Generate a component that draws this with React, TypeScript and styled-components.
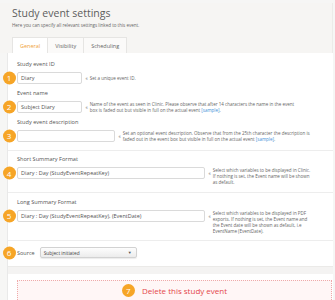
import React from 'react';
import styled, { createGlobalStyle } from 'styled-components';

const GlobalStyle = createGlobalStyle`
  html, body {
    margin: 0;
    padding: 0;
  }
  body {
    width: 335px;
    height: 300px;
    overflow: hidden;
    background: #f6f6f5;
    font-family: "Open Sans", "Liberation Sans", sans-serif;
    color: #555;
  }
`;

const Page = styled.div`
  width: 335px;
  height: 300px;
  padding-top: 3px;
  box-sizing: border-box;
  border-top: 0;
`;

const Header = styled.div`
  width: 333px;
  padding: 4px 0 0 12px;
  box-sizing: border-box;
  background: #f6f5f3;
  border-right: 1px solid #ecebe9;
`;

const Title = styled.h1`
  margin: 0;
  font-size: 10.5px;
  line-height: 12px;
  font-weight: 400;
  color: #5d5d5d;
`;

const Subtitle = styled.p`
  margin: 3px 0 0;
  font-size: 4.5px;
  line-height: 6px;
  color: #666;
`;

const TabBar = styled.div`
  display: flex;
  margin-top: 9px;
  height: 16px;
`;

const Tab = styled.div<{ $active?: boolean }>`
  display: flex;
  align-items: center;
  padding: 0 7px;
  font-size: 5.5px;
  background: ${(p) => (p.$active ? '#fff' : '#fbfaf9')};
  color: ${(p) => (p.$active ? '#f0a33a' : '#666')};
  border: 1px solid #e6e5e3;
  border-bottom: 0;
  margin-right: -1px;
`;

const Panel = styled.div`
  margin-left: 7px;
  width: 326px;
  background: #fff;
  border-left: 1px solid #e9e9e9;
  box-sizing: border-box;
`;

const Section = styled.div<{ $top?: number; $bottom?: number; $last?: boolean }>`
  padding: ${(p) => p.$top ?? 6}px 0 ${(p) => p.$bottom ?? 6.5}px 9px;
  border-bottom: ${(p) => (p.$last ? '0' : '1px solid #ededed')};
`;

const Field = styled.div`
  & + & {
    margin-top: 6px;
  }
`;

const Label = styled.div`
  font-size: 5.6px;
  line-height: 7px;
  margin-bottom: 4px;
  color: #555;
`;

const Row = styled.div`
  display: flex;
  align-items: flex-start;
`;

const InputWrap = styled.div`
  position: relative;
`;

const Badge = styled.span`
  display: inline-flex;
  align-items: center;
  justify-content: center;
  width: 13px;
  height: 13px;
  border-radius: 50%;
  background: #f6a527;
  color: #fff;
  font-size: 8px;
  line-height: 1;
  flex-shrink: 0;
`;

const SideBadge = styled(Badge)`
  position: absolute;
  left: -14.5px;
  top: 50%;
  transform: translateY(-50%);
`;

const Input = styled.div<{ $w: number }>`
  width: ${(p) => p.$w}px;
  height: 12px;
  box-sizing: border-box;
  border: 1px solid #dadada;
  border-radius: 2px;
  padding-left: 3px;
  display: flex;
  align-items: center;
  font-size: 5.5px;
  color: #555;
  white-space: nowrap;
`;

const Hint = styled.div`
  display: flex;
  align-items: flex-start;
  margin-left: 3.5px;
  color: #666;
  font-size: 4.5px;
`;

const Arrow = styled.span`
  line-height: 12px;
  margin-right: 2px;
`;

const HintText = styled.div`
  min-height: 12px;
  display: flex;
  align-items: center;
  line-height: 6px;
  white-space: nowrap;
`;

const Link = styled.span`
  color: #3f8fd8;
`;

const SourceRow = styled.div`
  position: relative;
  display: flex;
  align-items: center;
  height: 11px;
`;

const SourceLabel = styled.span`
  font-size: 5.5px;
  margin-right: 5px;
  color: #555;
`;

const Select = styled.div`
  width: 97px;
  height: 11px;
  box-sizing: border-box;
  display: flex;
  align-items: center;
  justify-content: space-between;
  padding: 0 4px 0 3px;
  font-size: 4.8px;
  color: #444;
  background: linear-gradient(#fdfdfd, #ececec);
  border: 1px solid #d2d2d2;
  border-radius: 2px;
  box-shadow: 0 1px 1px rgba(0, 0, 0, 0.08);
`;

const Caret = styled.span`
  font-size: 4px;
  color: #555;
`;

const Band = styled.div`
  height: 7px;
  background: #f4f3f2;
  border-top: 1px solid #ebeae8;
`;

const DeleteArea = styled.div`
  padding: 6px 1px 0 9px;
`;

const DeleteBox = styled.div`
  height: 22px;
  display: flex;
  align-items: flex-start;
  justify-content: center;
  padding-top: 3px;
  box-sizing: border-box;
  background: #fff6f6;
  border: 1px dotted #eeaaaa;
  border-bottom: 0;
`;

const DeleteText = styled.span`
  margin-left: 7px;
  font-size: 8px;
  line-height: 13px;
  color: #e4464a;
`;

const App = () => {
  return (
    <>
      <GlobalStyle />
      <Page>
        <Header>
          <Title>Study event settings</Title>
          <Subtitle>Here you can specify all relevant settings linked to this event.</Subtitle>
          <TabBar>
            <Tab $active>General</Tab>
            <Tab>Visibility</Tab>
            <Tab>Scheduling</Tab>
          </TabBar>
        </Header>

        <Panel>
          <Section $top={7.5} $bottom={8}>
            <Field>
              <Label>Study event ID</Label>
              <Row>
                <InputWrap>
                  <SideBadge>1</SideBadge>
                  <Input $w={65}>Diary</Input>
                </InputWrap>
                <Hint>
                  <Arrow>«</Arrow>
                  <HintText>Set a unique event ID.</HintText>
                </Hint>
              </Row>
            </Field>
            <Field>
              <Label>Event name</Label>
              <Row>
                <InputWrap>
                  <SideBadge>2</SideBadge>
                  <Input $w={65}>Subject Diary</Input>
                </InputWrap>
                <Hint>
                  <Arrow>«</Arrow>
                  <HintText>
                    <span>
                      Name of the event as seen in Clinic. Please observe that after 14 characters the name in the event
                      <br />
                      box is faded out but visible in full on the actual event <Link>[sample]</Link>.
                    </span>
                  </HintText>
                </Hint>
              </Row>
            </Field>
            <Field>
              <Label>Study event description</Label>
              <Row>
                <InputWrap>
                  <SideBadge>3</SideBadge>
                  <Input $w={98} />
                </InputWrap>
                <Hint>
                  <Arrow>«</Arrow>
                  <HintText>
                    <span>
                      Set an optional event description. Observe that from the 25th character the description is
                      <br />
                      faded out in the event box but visible in full on the actual event <Link>[sample]</Link>.
                    </span>
                  </HintText>
                </Hint>
              </Row>
            </Field>
          </Section>

          <Section $top={5.5}>
            <Field>
              <Label>Short Summary Format</Label>
              <Row>
                <InputWrap>
                  <SideBadge>4</SideBadge>
                  <Input $w={188}>Diary : Day (StudyEventRepeatKey)</Input>
                </InputWrap>
                <Hint>
                  <Arrow>«</Arrow>
                  <HintText>
                    <span>
                      Select which variables to be displayed in Clinic.
                      <br />
                      If nothing is set, the Event name will be shown
                      <br />
                      as default.
                    </span>
                  </HintText>
                </Hint>
              </Row>
            </Field>
          </Section>

          <Section $top={6} $bottom={6.5}>
            <Field>
              <Label>Long Summary Format</Label>
              <Row>
                <InputWrap>
                  <SideBadge>5</SideBadge>
                  <Input $w={188}>Diary : Day (StudyEventRepeatKey), (EventDate)</Input>
                </InputWrap>
                <Hint>
                  <Arrow>«</Arrow>
                  <HintText>
                    <span>
                      Select which variables to be displayed in PDF
                      <br />
                      exports. If nothing is set, the Event name and
                      <br />
                      the Event date will be shown as default, i.e
                      <br />
                      EventName (EventDate).
                    </span>
                  </HintText>
                </Hint>
              </Row>
            </Field>
          </Section>

          <Section $top={6} $bottom={8} $last>
            <SourceRow>
              <SideBadge>6</SideBadge>
              <SourceLabel>Source</SourceLabel>
              <Select>
                <span>Subject initiated</span>
                <Caret>▼</Caret>
              </Select>
            </SourceRow>
          </Section>

          <Band />

          <DeleteArea>
            <DeleteBox>
              <Badge>7</Badge>
              <DeleteText>Delete this study event</DeleteText>
            </DeleteBox>
          </DeleteArea>
        </Panel>
      </Page>
    </>
  );
};

export default App;
